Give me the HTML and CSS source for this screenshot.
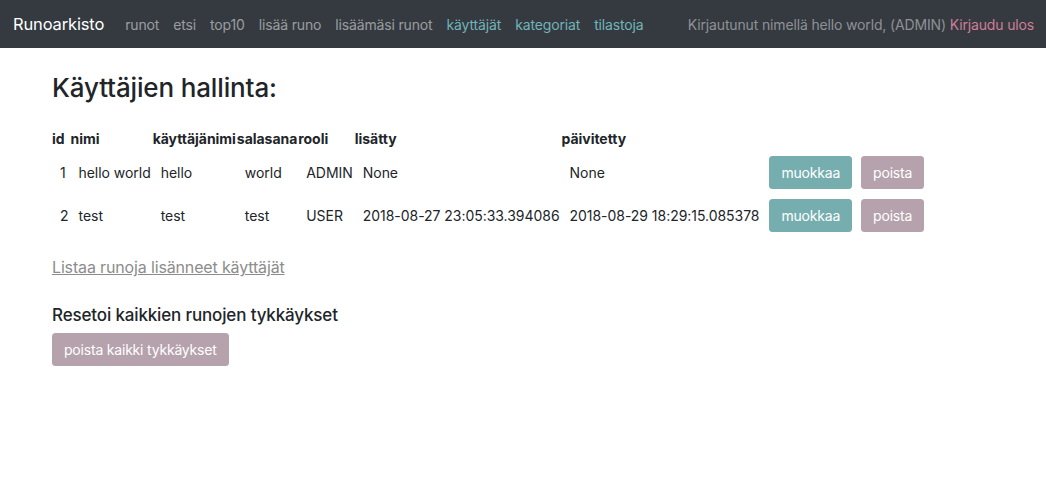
FILE: index.html
```html
<!DOCTYPE html>
<html lang="fi">
<head>
<meta charset="utf-8">
<title>Käyttäjien hallinta</title>
<link rel="stylesheet" href="styles.css">
</head>
<body>
<nav class="navbar">
  <a class="brand" href="#">Runoarkisto</a>
  <ul class="nav">
    <li><a class="nav-link" href="#">runot</a></li>
    <li><a class="nav-link" href="#">etsi</a></li>
    <li><a class="nav-link" href="#">top10</a></li>
    <li><a class="nav-link" href="#">lisää runo</a></li>
    <li><a class="nav-link" href="#">lisäämäsi runot</a></li>
    <li><a class="nav-link admin" href="#">käyttäjät</a></li>
    <li><a class="nav-link admin" href="#">kategoriat</a></li>
    <li><a class="nav-link admin" href="#">tilastoja</a></li>
  </ul>
  <div class="user">Kirjautunut nimellä hello world, (ADMIN) <a class="logout" href="#">Kirjaudu ulos</a></div>
</nav>
<main class="container">
  <h2 class="title">Käyttäjien hallinta:</h2>
  <table class="users">
    <thead>
      <tr><th>id</th><th>nimi</th><th>käyttäjänimi</th><th>salasana</th><th>rooli</th><th>lisätty</th><th>päivitetty</th><th></th></tr>
    </thead>
    <tbody>
      <tr>
        <td>1</td><td>hello world</td><td>hello</td><td>world</td><td>ADMIN</td><td>None</td><td>None</td>
        <td><div class="actions"><button class="btn btn-edit">muokkaa</button><button class="btn btn-del">poista</button></div></td>
      </tr>
      <tr>
        <td>2</td><td>test</td><td>test</td><td>test</td><td>USER</td><td>2018-08-27 23:05:33.394086</td><td>2018-08-29 18:29:15.085378</td>
        <td><div class="actions"><button class="btn btn-edit">muokkaa</button><button class="btn btn-del">poista</button></div></td>
      </tr>
    </tbody>
  </table>
  <a class="list-link" href="#">Listaa runoja lisänneet käyttäjät</a>
  <h5 class="subtitle">Resetoi kaikkien runojen tykkäykset</h5>
  <button class="btn btn-del">poista kaikki tykkäykset</button>
</main>
</body>
</html>
```
FILE: styles.css
```css
* { box-sizing: border-box; }
body {
  margin: 0;
  font-family: Inter, "Liberation Sans", sans-serif;
  font-size: 14px;
  line-height: 1.5;
  letter-spacing: -0.15px;
  color: #212529;
  background: #fff;
}
a { text-decoration: none; }
.navbar {
  display: flex;
  align-items: center;
  height: 48px;
  padding: 0 12px 0 13px;
  background: #343a40;
}
.brand {
  font-size: 16.5px;
  color: #fff;
  margin-right: 14px;
}
.nav {
  display: flex;
  list-style: none;
  margin: 0;
  padding: 0;
  flex: 1;
}
.nav-link {
  display: block;
  padding: 0 7px;
  color: rgba(255,255,255,0.5);
}
.nav-link.admin { color: #72b3b8; }
.user { color: rgba(255,255,255,0.45); }
.logout { color: #cf7d97; }
.container {
  padding: 0 52px;
}
.title {
  font-size: 26px;
  font-weight: 500;
  margin: 24px 0 25px;
  line-height: 1.2;
}
.users {
  border-collapse: collapse;
  margin-bottom: 18px;
  letter-spacing: -0.04px;
}
.users th {
  text-align: left;
  font-weight: 700;
  padding: 0 1px 2px 0;
}
.users td {
  padding: 5px 2px 5px 8px;
  vertical-align: middle;
}
.actions {
  display: flex;
  gap: 9px;
}
.btn {
  font-family: inherit;
  font-size: 14px;
  letter-spacing: -0.2px;
  line-height: 21px;
  padding: 6px 12px;
  border: 0;
  border-radius: 3.5px;
  color: #fff;
}
.btn-edit { background: #76aeb0; }
.btn-del { background: #b5a2ac; }
.list-link {
  display: inline-block;
  font-size: 16px;
  color: #8c8c8c;
  text-decoration: underline;
}
.subtitle {
  font-size: 17px;
  font-weight: 500;
  margin: 26px 0 7px;
  line-height: 1.2;
}
```
